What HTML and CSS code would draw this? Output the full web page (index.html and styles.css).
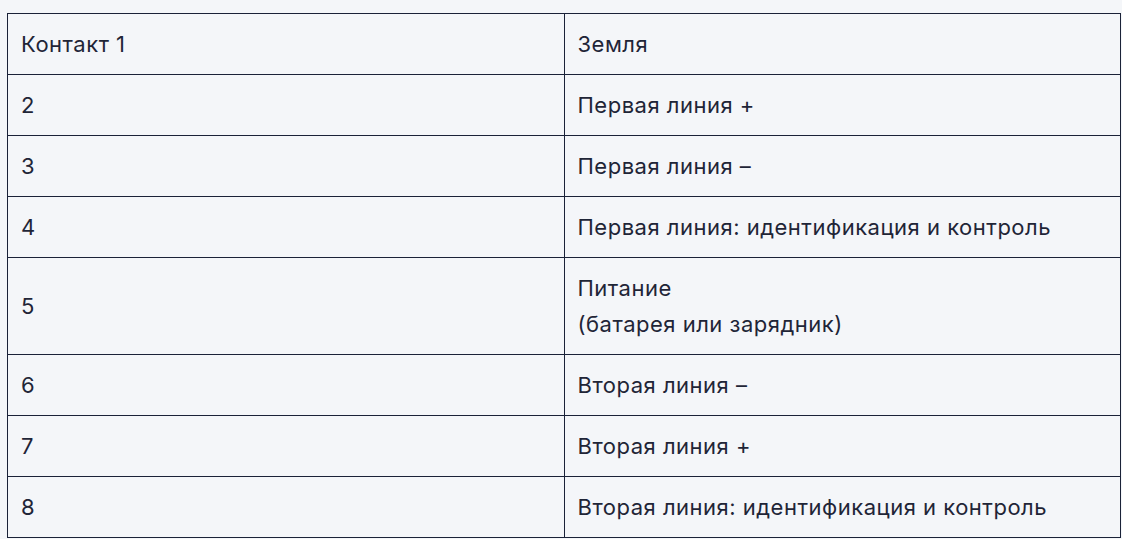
FILE: index.html
```html
<!DOCTYPE html>
<html lang="ru">
<head>
<meta charset="utf-8">
<link rel="stylesheet" href="styles.css">
</head>
<body>
<table class="pins">
  <tbody>
    <tr><td>Контакт 1</td><td>Земля</td></tr>
    <tr><td>2</td><td>Первая линия +</td></tr>
    <tr><td>3</td><td>Первая линия –</td></tr>
    <tr><td>4</td><td>Первая линия: идентификация и контроль</td></tr>
    <tr><td>5</td><td>Питание<br>(батарея или зарядник)</td></tr>
    <tr><td>6</td><td>Вторая линия –</td></tr>
    <tr><td>7</td><td>Вторая линия +</td></tr>
    <tr><td>8</td><td>Вторая линия: идентификация и контроль</td></tr>
  </tbody>
</table>
</body>
</html>
```

FILE: styles.css
```css
html, body {
  margin: 0;
  background: #f4f6f9;
}
body {
  padding: 13px 1px 0 7px;
  font-family: Inter, "Noto Sans", sans-serif;
  color: #1f2537;
}
.pins {
  width: 1114px;
  border-collapse: collapse;
  table-layout: fixed;
}
.pins td {
  width: 50%;
  border: 1px solid #1a2238;
  padding: 12px 13px;
  font-size: 22px;
  letter-spacing: 0.5px;
  line-height: 36px;
  vertical-align: middle;
}
```
